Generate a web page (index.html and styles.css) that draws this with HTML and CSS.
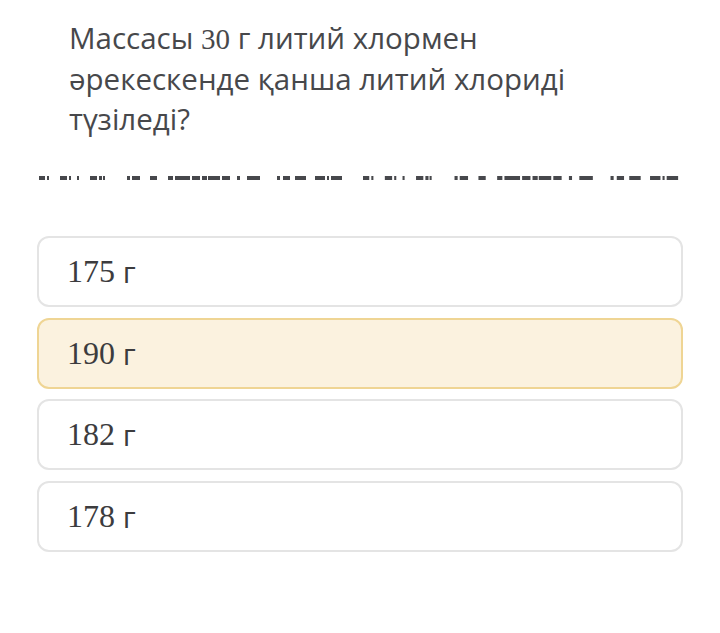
FILE: index.html
```html
<!DOCTYPE html>
<html lang="kk">
<head>
<meta charset="utf-8">
<title>Тест</title>
<link rel="stylesheet" href="styles.css">
</head>
<body>
<div class="page">
  <p class="question">Массасы <span class="num">30</span> г литий хлормен әрекескенде қанша литий хлориді түзіледі?</p>
  <svg class="redacted" width="720" height="8" viewBox="0 0 720 8" aria-hidden="true">
    <defs>
      <g id="grp" fill="#47484c">
        <rect x="0" y="2" width="6" height="4"/><rect x="8" y="2" width="2" height="4"/>
        <rect x="21" y="2" width="7" height="4"/><rect x="30" y="2" width="2" height="4"/>
        <rect x="38" y="2" width="2" height="4"/><rect x="51" y="2" width="7" height="4"/>
        <rect x="60" y="2" width="3" height="4"/><rect x="64" y="2" width="2" height="4"/>
        <rect x="88" y="2" width="3" height="4"/><rect x="93" y="2" width="8" height="4"/>
        <rect x="111" y="2" width="7" height="4"/><rect x="129" y="2" width="5" height="4"/>
        <rect x="136" y="2" width="15" height="4"/><rect x="153" y="2" width="8" height="4"/>
        <rect x="163" y="2" width="5" height="4"/><rect x="169" y="2" width="12" height="4"/>
        <rect x="183" y="2" width="8" height="4"/><rect x="198" y="2" width="3" height="4"/>
        <rect x="208" y="2" width="13" height="4"/><rect x="238" y="2" width="3" height="4"/>
        <rect x="244" y="2" width="7" height="4"/><rect x="256" y="2" width="11" height="4"/>
        <rect x="276" y="2" width="10" height="4"/><rect x="288" y="2" width="2" height="4"/>
        <rect x="292" y="2" width="11" height="4"/>
      </g>
    </defs>
    <use href="#grp" transform="translate(39 0)"/>
    <use href="#grp" transform="translate(363 0) scale(1.04 1)"/>
  </svg>
  <div class="options">
    <div class="option"><span class="num">175</span> г</div>
    <div class="option selected"><span class="num">190</span> г</div>
    <div class="option"><span class="num">182</span> г</div>
    <div class="option"><span class="num">178</span> г</div>
  </div>
</div>
</body>
</html>
```
FILE: styles.css
```css
html, body {
  margin: 0;
  padding: 0;
  background: #ffffff;
}
body {
  font-family: "Open Sans", "Noto Sans", sans-serif;
  color: #444446;
}
.page {
  width: 720px;
  height: 633px;
  padding-top: 18px;
  box-sizing: border-box;
}
.question {
  margin: 0;
  padding-left: 69px;
  max-width: 560px;
  font-size: 29.5px;
  line-height: 40px;
  color: #47484b;
}
.question .num {
  font-family: "Liberation Serif", serif;
  font-size: 29px;
}
.redacted {
  display: block;
  margin-top: 35px;
}
.options {
  margin: 54px 37px 0 37px;
  display: flex;
  flex-direction: column;
  gap: 10.5px;
}
.option {
  height: 71px;
  box-sizing: border-box;
  border: 2px solid #e4e4e4;
  border-radius: 12px;
  display: flex;
  align-items: center;
  padding-left: 28px;
  font-size: 30px;
  color: #3c3c3e;
  white-space: pre;
}
.option .num {
  font-family: "Liberation Serif", serif;
  font-size: 32px;
}
.option.selected {
  background: #fbf2df;
  border-color: #efd594;
}
```
